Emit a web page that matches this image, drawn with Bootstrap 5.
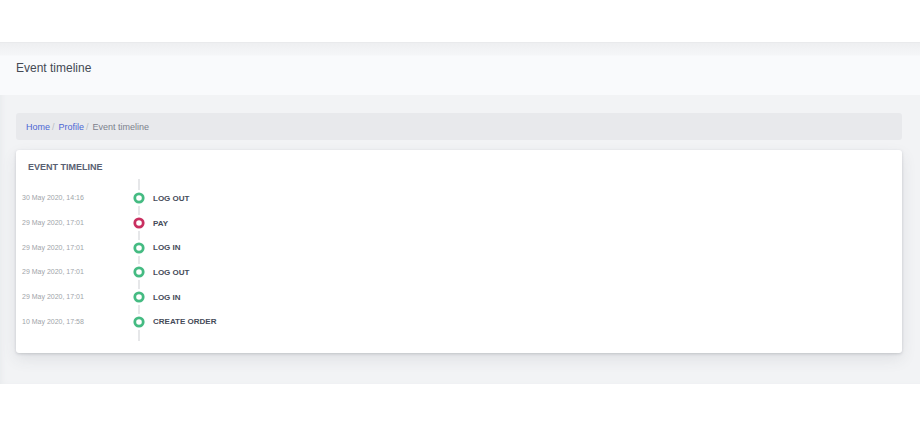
<!DOCTYPE html>
<html lang="en">
<head>
<meta charset="utf-8">
<meta name="viewport" content="width=device-width, initial-scale=1">
<title>Event timeline</title>
<link rel="stylesheet" href="https://cdn.jsdelivr.net/npm/bootstrap@5.3.0/dist/css/bootstrap.min.css">
<style>
  body { font-family: "Liberation Sans", Arial, sans-serif; font-size: 8px; line-height: 12px; color: #454b59; background: #fff; padding: 42px 0; }
  .app-shell { background: #f2f3f5; padding-bottom: 31px; box-shadow: inset 4px 0 6px -3px #e6e9eb; }
  .page-head { background: linear-gradient(#eeeff1 0, #f5f6f8 12px, #f9fafc 13px); border-top: 1px solid #e9eaec; padding: 15px 16px 17px; margin-bottom: 18px; }
  .page-head h1 { font-size: 12px; line-height: 20px; font-weight: 400; color: #454a55; }
  .page-body { padding: 0 18px 0 16px; }
  .crumbs { --bs-breadcrumb-item-padding-x: 2px; --bs-breadcrumb-divider-color: #b9bdc3; background: #e8e9ec; border-radius: 3px; padding: 8px 10px 7px; margin-bottom: 10px; font-size: 9px; color: #7c818c; }
  .crumbs .breadcrumb-item + .breadcrumb-item::before { padding-right: 4px; }
  .crumbs a { color: #4c66d4; text-decoration: none; }
  .crumbs .active { color: #7c818c; }
  .event-card { border: 0; border-radius: 3px; padding: 11px 6px 12px; box-shadow: 0 1px 3px rgba(60,65,75,.2), 0 6px 15px rgba(60,65,75,.1); }
  .event-card h2 { font-size: 9px; line-height: 12px; font-weight: 700; color: #596072; margin: 0 6px 6px; }
  .timeline { --line: #e6e7e9; min-height: 162px; padding: 7px 0; background: linear-gradient(var(--line), var(--line)) 116px 0 / 2px 100% no-repeat; }
  .event-time { width: 108px; font-size: 7px; color: #a0a4a9; }
  .event-dot { width: 18px; }
  .event-dot svg { display: block; }
  .event-name { font-weight: 700; margin-left: 5px; padding-top: 1px; }
  .dot-ok { color: #45bb82; }
  .dot-alert { color: #c92f60; }
</style>
</head>
<body>
<main class="app-shell">
  <header class="page-head"><h1 class="mb-0">Event timeline</h1></header>
  <div class="page-body">
    <nav aria-label="Breadcrumb">
      <ol class="breadcrumb crumbs">
        <li class="breadcrumb-item"><a href="#">Home</a></li>
        <li class="breadcrumb-item"><a href="#">Profile</a></li>
        <li class="breadcrumb-item active" aria-current="page">Event timeline</li>
      </ol>
    </nav>
    <svg class="d-none" aria-hidden="true"><symbol id="ring" viewBox="0 0 18 18"><circle cx="9" cy="9" r="8" fill="#fff"/><circle cx="9" cy="9" r="4.2" fill="none" stroke="currentColor" stroke-width="2.8"/></symbol></svg>
    <section class="card event-card">
      <h2>EVENT TIMELINE</h2>
      <ol class="timeline list-unstyled d-flex flex-column mb-0">
        <li class="d-flex flex-fill align-items-center"><time class="event-time" datetime="2020-05-30T14:16">30 May 2020, 14:16</time><span class="event-dot dot-ok"><svg width="18" height="18"><use href="#ring"/></svg></span><span class="event-name">LOG OUT</span></li>
        <li class="d-flex flex-fill align-items-center"><time class="event-time" datetime="2020-05-29T17:01">29 May 2020, 17:01</time><span class="event-dot dot-alert"><svg width="18" height="18"><use href="#ring"/></svg></span><span class="event-name">PAY</span></li>
        <li class="d-flex flex-fill align-items-center"><time class="event-time" datetime="2020-05-29T17:01">29 May 2020, 17:01</time><span class="event-dot dot-ok"><svg width="18" height="18"><use href="#ring"/></svg></span><span class="event-name">LOG IN</span></li>
        <li class="d-flex flex-fill align-items-center"><time class="event-time" datetime="2020-05-29T17:01">29 May 2020, 17:01</time><span class="event-dot dot-ok"><svg width="18" height="18"><use href="#ring"/></svg></span><span class="event-name">LOG OUT</span></li>
        <li class="d-flex flex-fill align-items-center"><time class="event-time" datetime="2020-05-29T17:01">29 May 2020, 17:01</time><span class="event-dot dot-ok"><svg width="18" height="18"><use href="#ring"/></svg></span><span class="event-name">LOG IN</span></li>
        <li class="d-flex flex-fill align-items-center"><time class="event-time" datetime="2020-05-10T17:58">10 May 2020, 17:58</time><span class="event-dot dot-ok"><svg width="18" height="18"><use href="#ring"/></svg></span><span class="event-name">CREATE ORDER</span></li>
      </ol>
    </section>
  </div>
</main>
<script src="https://cdn.jsdelivr.net/npm/bootstrap@5.3.0/dist/js/bootstrap.bundle.min.js"></script>
</body>
</html>
